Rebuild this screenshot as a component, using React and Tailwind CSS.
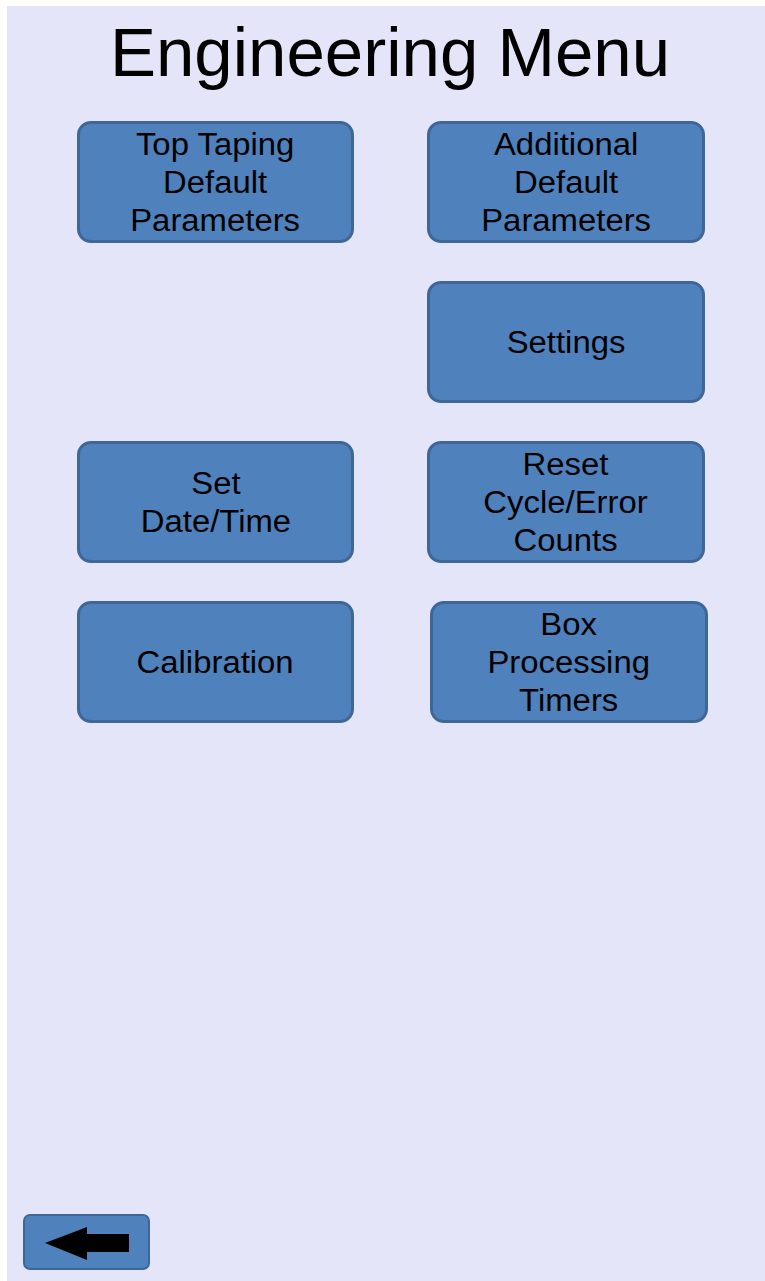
const buttons = [
  { lines: ['Top Taping', 'Default', 'Parameters'] },
  { lines: ['Additional', 'Default', 'Parameters'] },
  null,
  { lines: ['Settings'] },
  { lines: ['Set', 'Date/Time'] },
  { lines: ['Reset', 'Cycle/Error', 'Counts'] },
  { lines: ['Calibration'] },
  { lines: ['Box', 'Processing', 'Timers'], nudge: true },
];

function MenuButton({ lines, nudge }) {
  return (
    <button
      className={`h-[122px] w-full rounded-[14px] border-[3px] border-[#3e6798] bg-[#4f81bd] flex items-center justify-center pt-[2px] ${nudge ? 'ml-[3px]' : ''}`}
    >
      <span className="block scale-x-[1.06] text-[31px] leading-[38px] text-black">
        {lines.map((l) => (
          <span key={l} className="block">{l}</span>
        ))}
      </span>
    </button>
  );
}

export default function App() {
  return (
    <div
      className="h-[1281px] w-[765px] bg-white pt-[6px] pl-[7px] overflow-hidden"
      style={{ fontFamily: '"Liberation Sans", Arial, sans-serif' }}
    >
      <div className="h-[1275px] bg-[#e4e5f8] flex flex-col">
        <h1 className="pt-[12px] pl-[8px] text-center text-[69px] leading-none text-black">
          Engineering Menu
        </h1>

        <div className="mt-[34px] pl-[70px] grid grid-cols-[277px_278px] gap-x-[73px] gap-y-[38px]">
          {buttons.map((b, i) =>
            b ? <MenuButton key={i} lines={b.lines} nudge={b.nudge} /> : <div key={i} />
          )}
        </div>

        <div className="mt-auto pl-[16px] pb-[11px] flex">
          <button className="w-[127px] h-[56px] rounded-[7px] border-2 border-[#3e6798] bg-[#4f81bd] relative">
            <svg width="127" height="56" viewBox="0 0 127 56" className="absolute -left-[2px] -top-[2px]">
              <polygon points="22,29 64,13 64,20 106,20 106,38 64,38 64,46" fill="#000" />
            </svg>
          </button>
        </div>
      </div>
    </div>
  );
}
